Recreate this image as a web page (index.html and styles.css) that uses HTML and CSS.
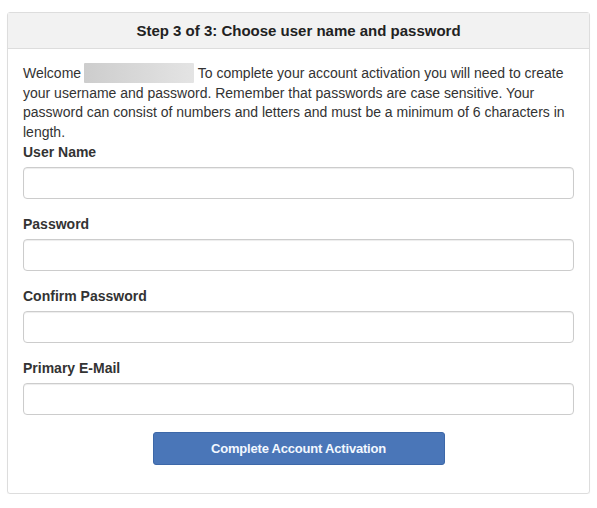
FILE: index.html
```html
<!DOCTYPE html>
<html>
<head>
<meta charset="utf-8">
<link rel="stylesheet" href="styles.css">
</head>
<body>
<div class="panel">
  <div class="panel-heading">Step 3 of 3: Choose user name and password</div>
  <div class="panel-body">
    <p class="intro">Welcome<span class="redacted"></span> To complete your account activation you will need to create your username and password. Remember that passwords are case sensitive. Your password can consist of numbers and letters and must be a minimum of 6 characters in length.</p>
    <div class="form-group">
      <label class="label">User Name</label>
      <input class="input" type="text">
    </div>
    <div class="form-group">
      <label class="label">Password</label>
      <input class="input" type="password">
    </div>
    <div class="form-group">
      <label class="label">Confirm Password</label>
      <input class="input" type="password">
    </div>
    <div class="form-group">
      <label class="label">Primary E-Mail</label>
      <input class="input" type="text">
    </div>
    <div class="actions">
      <button class="btn" type="button">Complete Account Activation</button>
    </div>
  </div>
</div>
</body>
</html>
```
FILE: styles.css
```css
html, body {
  margin: 0;
  padding: 0;
  background: #ffffff;
}
body {
  font-family: "Liberation Sans", Arial, sans-serif;
  font-size: 14px;
  color: #333333;
}
.panel {
  margin: 12px 7px 0 7px;
  width: 581px;
  border: 1px solid #dddddd;
  border-radius: 3px;
  box-shadow: 0 1px 1px rgba(0,0,0,0.05);
}
.panel-heading {
  height: 35px;
  line-height: 35px;
  background: #f2f2f2;
  border-bottom: 1px solid #dddddd;
  text-align: center;
  font-weight: bold;
  font-size: 15px;
  color: #222222;
}
.panel-body {
  padding: 15px 15px 28px 15px;
}
.intro {
  margin: 0;
  line-height: 19.5px;
}
.redacted {
  display: inline-block;
  width: 110px;
  height: 20px;
  margin: -3px 0 -3px 3px;
  vertical-align: -2px;
  background: linear-gradient(90deg, #cdcdcd, #d6d6d6 40%, #e4e4e4);
  border-radius: 1px;
}
.form-group {
  margin-bottom: 15px;
}
.label {
  display: block;
  font-weight: bold;
  line-height: 20px;
  margin-bottom: 5px;
  color: #333333;
}
.input {
  display: block;
  box-sizing: border-box;
  width: 100%;
  height: 32px;
  margin: 0;
  border: 1px solid #cccccc;
  border-radius: 4px;
  background: #ffffff;
  box-shadow: inset 0 1px 1px rgba(0,0,0,0.075);
}
.actions {
  display: flex;
  justify-content: center;
  padding-top: 2px;
}
.btn {
  width: 292px;
  height: 33px;
  border: 1px solid #3d68a8;
  border-radius: 3px;
  background: #4a76b8;
  color: #f2f8ff;
  font-family: "Liberation Sans", Arial, sans-serif;
  font-size: 13px;
  font-weight: bold;
  letter-spacing: -0.2px;
}
```
